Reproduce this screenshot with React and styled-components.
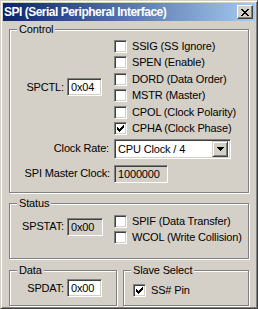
import React from 'react';
import styled, { createGlobalStyle } from 'styled-components';

const GlobalStyle = createGlobalStyle`
  html, body {
    margin: 0;
    padding: 0;
    background: #d4d0c8;
  }
  body {
    font-family: "Liberation Sans", Arial, sans-serif;
    font-size: 11px;
    letter-spacing: -0.15px;
    color: #000;
  }
`;

const Window = styled.div`
  width: 258px;
  height: 309px;
  box-sizing: border-box;
  background: #d4d0c8;
  border: 1px solid;
  border-color: #d4d0c8 #404040 #404040 #d4d0c8;
  box-shadow: inset 1px 1px #fff, inset -1px -1px #808080;
  padding: 2px;
  display: flex;
  flex-direction: column;
`;

const TitleBar = styled.div`
  height: 18px;
  flex: none;
  display: flex;
  align-items: center;
  justify-content: space-between;
  padding: 0 2px 0 1px;
  background: linear-gradient(to right, #0a246a, #a6caf0);
`;

const Title = styled.span`
  color: #fff;
  font-family: "Liberation Sans", Arial, sans-serif;
  font-weight: bold;
  font-size: 12px;
  letter-spacing: -0.5px;
  line-height: 18px;
  white-space: nowrap;
`;

const CloseButton = styled.div`
  width: 16px;
  height: 14px;
  box-sizing: border-box;
  background: #d4d0c8;
  border: 1px solid;
  border-color: #fff #404040 #404040 #fff;
  box-shadow: inset -1px -1px #808080;
  display: flex;
  align-items: center;
  justify-content: center;
`;

const Client = styled.div`
  flex: 1;
  display: flex;
  flex-direction: column;
  padding: 2px 6px 0 6px;
`;

const Group = styled.fieldset`
  margin: ${(p) => p.mt || 0}px 0 0 0;
  padding: ${(p) => p.pad};
  min-width: 0;
  box-sizing: border-box;
  width: ${(p) => (p.w ? `${p.w}px` : 'auto')};
  flex: ${(p) => (p.w ? 'none' : '1')};
  border: 1px solid #808080;
  box-shadow: 1px 1px 0 #fff, inset 1px 1px 0 #fff;
`;

const Legend = styled.legend`
  margin-left: 7px;
  padding: 0 2px;
  line-height: 13px;
  background: #d4d0c8;
`;

const Row = styled.div`
  display: flex;
  align-items: ${(p) => p.align || 'center'};
  margin-top: ${(p) => p.mt || 0}px;
`;

const LeftCell = styled.div`
  width: 104px;
  flex: none;
  box-sizing: border-box;
  display: flex;
  align-items: center;
  justify-content: flex-end;
  gap: 3px;
  padding-right: ${(p) => p.pr}px;
  margin-top: ${(p) => p.mt || 0}px;
`;

const Label = styled.span`
  white-space: nowrap;
  line-height: 13px;
`;

const Field = styled.div`
  width: ${(p) => p.w}px;
  height: 18px;
  box-sizing: border-box;
  border: 1px solid;
  border-color: #808080 #fff #fff #808080;
  box-shadow: inset 1px 1px #404040, inset -1px -1px #d4d0c8;
  background: ${(p) => (p.readOnly ? '#d4d0c8' : '#fff')};
  padding: 0 0 0 3px;
  line-height: 16px;
  white-space: nowrap;
  overflow: hidden;
`;

const CheckList = styled.div`
  display: flex;
  flex-direction: column;
  gap: ${(p) => p.gap}px;
`;

const CheckRow = styled.div`
  display: flex;
  align-items: center;
  height: 13px;
  gap: 5px;
`;

const Box = styled.div`
  width: 13px;
  height: 13px;
  flex: none;
  box-sizing: border-box;
  border: 1px solid;
  border-color: #808080 #fff #fff #808080;
  box-shadow: inset 1px 1px #404040, inset -1px -1px #d4d0c8;
  background: #fff;
  display: flex;
  align-items: center;
  justify-content: center;
`;

const Combo = styled.div`
  width: 117px;
  height: 20px;
  box-sizing: border-box;
  border: 1px solid;
  border-color: #808080 #fff #fff #808080;
  box-shadow: inset 1px 1px #404040, inset -1px -1px #d4d0c8;
  background: #fff;
  padding: 2px 2px 2px 3px;
  display: flex;
  align-items: center;
  justify-content: space-between;
`;

const ComboText = styled.span`
  line-height: 16px;
  white-space: nowrap;
`;

const ArrowButton = styled.div`
  width: 16px;
  height: 16px;
  box-sizing: border-box;
  background: #d4d0c8;
  border: 1px solid;
  border-color: #d4d0c8 #404040 #404040 #d4d0c8;
  box-shadow: inset 1px 1px #fff, inset -1px -1px #808080;
  display: flex;
  align-items: center;
  justify-content: center;
`;

const BottomRow = styled.div`
  display: flex;
  gap: 6px;
  margin-top: 5px;
`;

const Inline = styled.div`
  display: flex;
  align-items: center;
  gap: 3px;
  justify-content: ${(p) => p.justify || 'flex-start'};
  padding: ${(p) => p.pad || 0};
`;

const CheckMark = () => (
  <svg width="7" height="7" viewBox="0 0 7 7" shapeRendering="crispEdges">
    <path
      d="M0 2h1v3H0z M1 3h1v3H1z M2 4h1v3H2z M3 3h1v3H3z M4 2h1v3H4z M5 1h1v3H5z M6 0h1v3H6z"
      fill="#000"
    />
  </svg>
);

const CloseGlyph = () => (
  <svg width="8" height="7" viewBox="0 0 8 7" shapeRendering="crispEdges">
    <path
      d="M0 0h2v1H0z M6 0h2v1H6z M1 1h2v1H1z M5 1h2v1H5z M2 2h4v1H2z M3 3h2v1H3z M2 4h4v1H2z M1 5h2v1H1z M5 5h2v1H5z M0 6h2v1H0z M6 6h2v1H6z"
      fill="#000"
    />
  </svg>
);

const DownArrow = () => (
  <svg width="7" height="4" viewBox="0 0 7 4" shapeRendering="crispEdges">
    <path d="M0 0h7v1H0z M1 1h5v1H1z M2 2h3v1H2z M3 3h1v1H3z" fill="#000" />
  </svg>
);

const Check = ({ label, checked }) => (
  <CheckRow>
    <Box>{checked && <CheckMark />}</Box>
    <Label>{label}</Label>
  </CheckRow>
);

const controlBits = [
  { label: 'SSIG (SS Ignore)', checked: false },
  { label: 'SPEN (Enable)', checked: false },
  { label: 'DORD (Data Order)', checked: false },
  { label: 'MSTR (Master)', checked: false },
  { label: 'CPOL (Clock Polarity)', checked: false },
  { label: 'CPHA (Clock Phase)', checked: true },
];

const App = () => {
  return (
    <>
      <GlobalStyle />
      <Window>
        <TitleBar>
          <Title>SPI (Serial Peripheral Interface)</Title>
          <CloseButton>
            <CloseGlyph />
          </CloseButton>
        </TitleBar>

        <Client>
          <Group pad="4px 0 9px 0">
            <Legend>Control</Legend>
            <Row>
              <LeftCell pr={12}>
                <Label>SPCTL:</Label>
                <Field w={35}>0x04</Field>
              </LeftCell>
              <CheckList gap={3.4}>
                {controlBits.map((b) => (
                  <Check key={b.label} label={b.label} checked={b.checked} />
                ))}
              </CheckList>
            </Row>
            <Row mt={4}>
              <LeftCell pr={5}>
                <Label>Clock Rate:</Label>
              </LeftCell>
              <Combo>
                <ComboText>CPU Clock / 4</ComboText>
                <ArrowButton>
                  <DownArrow />
                </ArrowButton>
              </Combo>
            </Row>
            <Row mt={6}>
              <LeftCell pr={4}>
                <Label>SPI Master Clock:</Label>
              </LeftCell>
              <Field w={54} readOnly>1000000</Field>
            </Row>
          </Group>

          <Group mt={4} pad="5px 0 6px 0">
            <Legend>Status</Legend>
            <Row align="flex-start">
              <LeftCell pr={11} mt={3}>
                <Label>SPSTAT:</Label>
                <Field w={36} readOnly>0x00</Field>
              </LeftCell>
              <CheckList gap={3}>
                <Check label="SPIF (Data Transfer)" />
                <Check label="WCOL (Write Collision)" />
              </CheckList>
            </Row>
          </Group>

          <BottomRow>
            <Group w={108} pad="2px 0 8px 0">
              <Legend>Data</Legend>
              <Inline justify="flex-end" pad="0 14px 0 0">
                <Label>SPDAT:</Label>
                <Field w={35}>0x00</Field>
              </Inline>
            </Group>
            <Group pad="7px 0 0 0">
              <Legend>Slave Select</Legend>
              <Inline pad="0 0 0 9px">
                <Check label="SS# Pin" checked />
              </Inline>
            </Group>
          </BottomRow>
        </Client>
      </Window>
    </>
  );
};

export default App;
